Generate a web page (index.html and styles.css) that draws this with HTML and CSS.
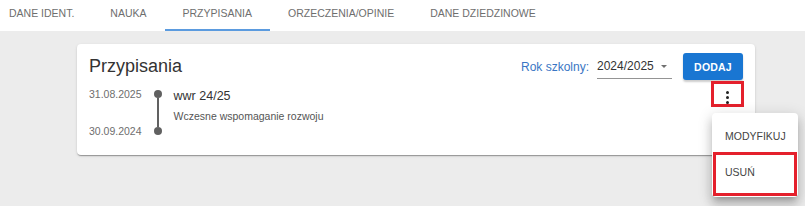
FILE: index.html
```html
<!DOCTYPE html>
<html lang="pl">
<head>
    <meta charset="UTF-8">
    <meta name="viewport" content="width=device-width, initial-scale=1.0">
    <title>Przypisania</title>
    <link rel="stylesheet" href="styles.css">
</head>
<body>
    <nav class="tabs">
        <div class="tab first">DANE IDENT.</div>
        <div class="tab">NAUKA</div>
        <div class="tab active">PRZYPISANIA</div>
        <div class="tab">ORZECZENIA/OPINIE</div>
        <div class="tab">DANE DZIEDZINOWE</div>
    </nav>

    <main class="content">
        <section class="card">
            <div class="card-header">
                <h2 class="card-title">Przypisania</h2>
                <div class="filters">
                    <span class="year-label">Rok szkolny:</span>
                    <div class="year-select">
                        <span>2024/2025</span>
                        <span class="arrow"></span>
                    </div>
                    <button class="btn-add">DODAJ</button>
                </div>
            </div>

            <div class="entry">
                <div class="entry-dates">
                    <span>31.08.2025</span>
                    <span>30.09.2024</span>
                </div>
                <div class="timeline">
                    <span class="dot"></span>
                    <span class="line"></span>
                    <span class="dot"></span>
                </div>
                <div class="entry-body">
                    <div class="entry-name">wwr 24/25</div>
                    <div class="entry-desc">Wczesne wspomaganie rozwoju</div>
                </div>
                <button class="kebab marked"><span></span><span></span><span></span></button>
            </div>

            <!-- opened row menu -->
            <ul class="menu">
                <li class="menu-item">MODYFIKUJ</li>
                <li class="menu-item delete marked">USUŃ</li>
            </ul>
        </section>
    </main>
</body>
</html>
```

FILE: styles.css
```css
:root {
    --primary-color: #1976d2;
    --tab-line: #5b9bdf;
    --bg-color: #ececec;
    --text-color: #333;
    --muted: #6e6e6e;
    --mark: #e4202c;
}

body {
    font-family: 'Liberation Sans', Arial, sans-serif;
    margin: 0;
    padding: 0;
    background-color: var(--bg-color);
    color: var(--text-color);
    height: 206px;
    overflow: hidden;
}

.tabs {
    display: flex;
    height: 31px;
    background: white;
}

.tab {
    box-sizing: border-box;
    height: 31px;
    padding: 0 18px;
    line-height: 27px;
    font-size: 10.5px;
    color: var(--muted);
    border-bottom: 2px solid transparent;
    white-space: nowrap;
}

.tab.first {
    padding-left: 9px;
}

.tab.active {
    border-bottom-color: var(--tab-line);
}

.content {
    padding: 13px 50px 0 77px;
}

.card {
    position: relative;
    background: white;
    border-radius: 4px;
    padding: 9px 12px 17px 12px;
    box-shadow: 0 2px 1px -1px rgba(0, 0, 0, 0.2), 0 1px 1px 0 rgba(0, 0, 0, 0.14), 0 1px 3px 0 rgba(0, 0, 0, 0.12);
}

.card-header {
    display: flex;
    align-items: center;
    justify-content: space-between;
    height: 27px;
}

.card-title {
    margin: 0;
    font-size: 18px;
    font-weight: normal;
    color: var(--text-color);
}

.filters {
    display: flex;
    align-items: center;
}

.year-label {
    font-size: 12px;
    color: #3a76c4;
    margin-right: 8px;
}

.year-select {
    box-sizing: border-box;
    display: flex;
    align-items: center;
    justify-content: space-between;
    width: 75px;
    height: 24px;
    padding: 0 5px 2px 0;
    margin-top: 1px;
    border-bottom: 1px solid #949494;
    font-size: 12px;
    color: var(--text-color);
}

.arrow {
    width: 0;
    height: 0;
    border-left: 3px solid transparent;
    border-right: 3px solid transparent;
    border-top: 3px solid #707070;
    margin-top: 2px;
}

.btn-add {
    margin-left: 11px;
    width: 60px;
    height: 27px;
    border: none;
    border-radius: 3px;
    background-color: var(--primary-color);
    color: white;
    font-family: inherit;
    font-size: 10.5px;
    font-weight: bold;
    letter-spacing: 0.2px;
    padding: 0;
    box-shadow: 0 2px 2px rgba(0, 0, 0, 0.2);
}

.entry {
    display: flex;
    align-items: flex-start;
    margin-top: 1px;
}

.entry-dates {
    display: flex;
    flex-direction: column;
    gap: 23px;
    margin-top: 6px;
    font-size: 10.5px;
    line-height: 14px;
    color: var(--muted);
}

.timeline {
    display: flex;
    flex-direction: column;
    align-items: center;
    width: 8px;
    height: 45px;
    margin: 9px 12px 0 12px;
}

.dot {
    width: 8px;
    height: 8px;
    border-radius: 50%;
    background: #616161;
}

.line {
    flex: 1;
    width: 2px;
    background: #616161;
}

.entry-body {
    flex: 1;
    margin-top: 7px;
}

.entry-name {
    font-size: 12.5px;
    line-height: 16px;
    color: var(--text-color);
}

.entry-desc {
    margin-top: 5px;
    font-size: 10.5px;
    line-height: 14px;
    color: #555;
}

.marked {
    border: 3px solid var(--mark);
}

.kebab {
    box-sizing: border-box;
    display: flex;
    flex-direction: column;
    align-items: center;
    justify-content: flex-end;
    gap: 2px;
    width: 33px;
    height: 26px;
    margin-right: -1px;
    padding: 0;
    background: white;
}

.kebab span {
    width: 3px;
    height: 3px;
    border-radius: 50%;
    background: #222;
}

.menu {
    position: absolute;
    top: 69px;
    left: 635px;
    width: 86px;
    margin: 0;
    padding: 6px 0 1px 0;
    list-style: none;
    background: white;
    border-radius: 4px;
    box-shadow: 0 5px 5px -3px rgba(0, 0, 0, 0.2), 0 8px 10px 1px rgba(0, 0, 0, 0.14), 0 3px 14px 2px rgba(0, 0, 0, 0.12);
}

.menu-item {
    display: flex;
    align-items: center;
    height: 33px;
    padding-left: 13px;
    font-size: 10.5px;
    color: #444;
}

.menu-item.delete {
    box-sizing: border-box;
    height: 44px;
    margin: 0 1px;
    padding: 0 0 4px 9px;
}
```
